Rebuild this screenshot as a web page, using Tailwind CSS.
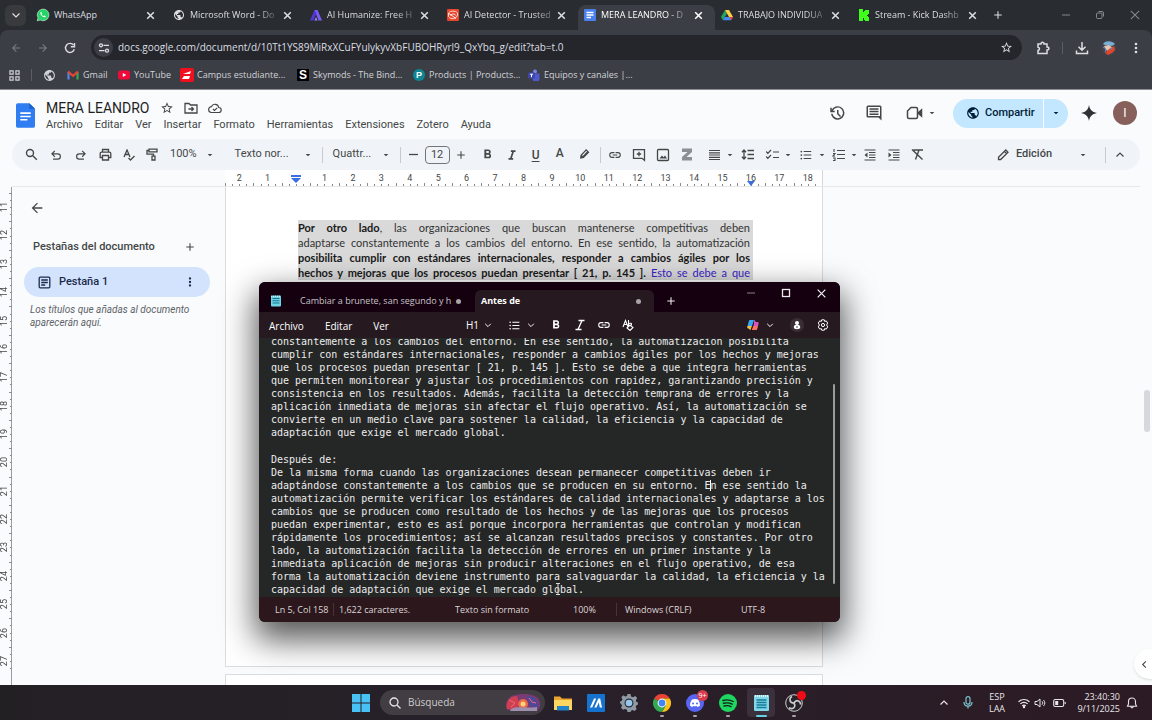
<!DOCTYPE html>
<html lang="es">
<head>
    <meta charset="UTF-8">
    <meta name="viewport" content="width=device-width, initial-scale=1.0">
    <title>MERA LEANDRO - Documentos de Google</title>
    <script src="https://cdn.jsdelivr.net/npm/@tailwindcss/browser@4"></script>
</head>
<body class="relative flex min-h-screen flex-col overflow-hidden bg-[#f9fbfd] font-['Open_Sans','Noto_Sans',sans-serif] text-[#444746]">

    <!-- Shared icons -->
    <svg class="hidden">
        <symbol id="i-x" viewBox="0 0 10 10"><path d="M2 2l6 6M8 2L2 8" stroke="currentColor" stroke-width="1.4" fill="none"/></symbol>
        <symbol id="i-caret" viewBox="0 0 24 24"><path d="M5 9l7 7 7-7z" fill="currentColor"/></symbol>
        <symbol id="i-chev" viewBox="0 0 10 10"><path d="M1.500 3.500L5 7l3.500-3.500" stroke="currentColor" stroke-width="1.200" fill="none"/></symbol>
        <symbol id="i-plus" viewBox="0 0 12 12"><path d="M6 1.500v9M1.500 6h9" stroke="currentColor" stroke-width="1.300" fill="none"/></symbol>
        <symbol id="i-dots" viewBox="0 0 24 24"><path d="M12 8a2 2 0 1 0 0-4 2 2 0 0 0 0 4zm0 2a2 2 0 1 0 0 4 2 2 0 0 0 0-4zm0 6a2 2 0 1 0 0 4 2 2 0 0 0 0-4z" fill="currentColor"/></symbol>
        <symbol id="i-back" viewBox="0 0 24 24"><path d="M20 11H7.800l5.600-5.600L12 4l-8 8 8 8 1.400-1.400L7.800 13H20z" fill="currentColor"/></symbol>
        <symbol id="i-star" viewBox="0 0 24 24"><path d="M22 9.240l-7.190-.62L12 2 9.190 8.630 2 9.240l5.460 4.730L5.820 21 12 17.270 18.180 21l-1.630-7.030L22 9.240zM12 15.400l-3.760 2.270 1-4.280-3.320-2.880 4.380-.38L12 6.100l1.710 4.040 4.380.38-3.320 2.880 1 4.280L12 15.400z" fill="currentColor"/></symbol>
        <symbol id="i-globe" viewBox="0 0 24 24"><path d="M12 2C6.480 2 2 6.480 2 12s4.480 10 10 10 10-4.480 10-10S17.520 2 12 2zm-1 17.930c-3.950-.49-7-3.850-7-7.930 0-.62.08-1.210.21-1.790L9 15v1c0 1.100.9 2 2 2v1.930zm6.900-2.540c-.26-.81-1-1.390-1.900-1.390h-1v-3c0-.55-.45-1-1-1H8v-2h2c.55 0 1-.45 1-1V7h2c1.100 0 2-.9 2-2v-.41c2.930 1.190 5 4.060 5 7.410 0 2.080-.8 3.970-2.100 5.390z" fill="currentColor"/></symbol>
        <symbol id="i-link" viewBox="0 0 24 24"><path d="M3.900 12c0-1.710 1.390-3.100 3.100-3.100h4V7H7a5 5 0 0 0 0 10h4v-1.900H7c-1.710 0-3.100-1.390-3.100-3.100zM8 13h8v-2H8v2zm9-6h-4v1.900h4a3.100 3.100 0 0 1 0 6.200h-4V17h4a5 5 0 0 0 0-10z" fill="currentColor"/></symbol>
        <symbol id="i-redo" viewBox="0 0 24 24"><path d="M14 5l5 5-5 5M19 10H9a4.500 4.500 0 0 0 0 9h8" stroke="currentColor" stroke-width="2" fill="none"/></symbol>
        <symbol id="i-italic" viewBox="0 0 24 24"><path d="M10 4v3h2.210l-3.420 10H6v3h8v-3h-2.210l3.420-10H18V4z" fill="currentColor"/></symbol>
        <symbol id="i-bold" viewBox="0 0 24 24"><path d="M15.600 10.790c.97-.67 1.650-1.770 1.650-2.790 0-2.260-1.750-4-4-4H7v14h7.040c2.090 0 3.710-1.700 3.710-3.790 0-1.520-.86-2.820-2.150-3.420zM10 6.500h3a1.500 1.500 0 0 1 0 3h-3v-3zm3.500 9H10v-3h3.500a1.500 1.500 0 0 1 0 3z" fill="currentColor"/></symbol>
        <symbol id="i-list" viewBox="0 0 24 24"><path d="M4 10.500a1.500 1.500 0 1 0 0 3 1.500 1.500 0 0 0 0-3zm0-6a1.500 1.500 0 1 0 0 3 1.500 1.500 0 0 0 0-3zm0 12a1.500 1.500 0 1 0 0 3 1.500 1.500 0 0 0 0-3zM8 19h13v-2H8v2zm0-6h13v-2H8v2zm0-8v2h13V5H8z" fill="currentColor"/></symbol>
        <symbol id="i-gdoc" viewBox="0 0 20 26"><path d="M2 0h12l6 6v18a2 2 0 0 1-2 2H2a2 2 0 0 1-2-2V2a2 2 0 0 1 2-2z" fill="#2f7df0"/><path d="M14 0l6 6h-6z" fill="#1a5fd0"/><path d="M4.500 10.500h11M4.500 14h11M4.500 17.500h7.500" stroke="#fff" stroke-width="1.600"/></symbol>
    </svg>

    <!-- Browser -->
    <header class="bg-[#292c30] text-[#dcdee2]">
        <div class="flex h-[30px] items-center">
            <button class="mr-[1px] ml-[5px] flex h-[21px] w-[21px] items-center justify-center rounded-md bg-[#383a3e]" aria-label="Buscar pestañas"><svg class="h-2.5 w-2.5"><use href="#i-chev"/></svg></button>
            <nav class="ml-[3px] flex h-full text-[9px]">
                <div class="flex w-[137px] items-center pr-[11px] pl-[6px]">
                    <svg class="h-3.5 w-3.5 shrink-0" viewBox="0 0 24 24"><path d="M2 22l1.500-5.200A10 10 0 1 1 7.200 20.500z" fill="#25d366" stroke="#dff7e6" stroke-width="1"/><path d="M8 7c1-1 2 .5 2.300 1.600.2.800-1 1.200-.7 1.900.7 1.500 1.800 2.600 3.300 3.200.8.300 1.200-1.300 2-1 1 .4 2.400 1.100 1.600 2.200-1.300 1.800-4 1-6.100-.8C8 12.200 6.500 9 8 7z" fill="#fff"/></svg>
                    <span class="ml-[4px] flex-1 whitespace-nowrap">WhatsApp</span>
                    <button aria-label="Cerrar"><svg class="h-[11px] w-[11px]"><use href="#i-x"/></svg></button>
                </div>
                <div class="flex w-[137px] items-center pr-[11px] pl-[6px]">
                    <svg class="h-3 w-3 shrink-0"><use href="#i-globe"/></svg>
                    <span class="ml-[5px] mask-r-from-80% mask-r-to-110% whitespace-nowrap">Microsoft Word - Do</span>
                    <button class="ml-auto" aria-label="Cerrar"><svg class="h-[11px] w-[11px]"><use href="#i-x"/></svg></button>
                </div>
                <div class="flex w-[137px] items-center pr-[11px] pl-[6px]">
                    <svg class="h-3 w-3 shrink-0" viewBox="0 0 12 12"><path d="M4.500 1h3L12 11.500H8.500L6 5z" fill="#7b5cf5"/><path d="M4.500 1L0 11.500h3.200L6.500 4z" fill="#5138d6"/><path d="M4.300 11.500L6 8l1.500 3.500z" fill="#9b84ff"/></svg>
                    <span class="ml-[5px] mask-r-from-80% mask-r-to-110% whitespace-nowrap">AI Humanize: Free H</span>
                    <button class="ml-auto" aria-label="Cerrar"><svg class="h-[11px] w-[11px]"><use href="#i-x"/></svg></button>
                </div>
                <div class="flex w-[137px] items-center pr-[11px] pl-[6px]">
                    <svg class="h-3 w-3 shrink-0" viewBox="0 0 12 12"><rect width="12" height="12" rx="1" fill="#e8452a"/><path d="M1.500 4c2-2.500 7-2.500 9 0v2.500C9 10 4 11 1.500 7.500z" fill="none" stroke="#fff" stroke-width=".8"/><path d="M2 4.500l7 5M3.500 6.500c1.500-2 4-2 5.500 0" fill="none" stroke="#fff" stroke-width=".9"/></svg>
                    <span class="ml-[5px] mask-r-from-80% mask-r-to-110% whitespace-nowrap">AI Detector - Trusted</span>
                    <button class="ml-auto" aria-label="Cerrar"><svg class="h-[11px] w-[11px]"><use href="#i-x"/></svg></button>
                </div>
                <div class="mt-[5px] flex w-[137px] items-center rounded-t-lg bg-[#3c3e45] pr-[11px] pb-[5px] pl-[6px] text-white">
                    <svg class="h-3 w-3 shrink-0" viewBox="0 0 12 12"><rect width="12" height="12" rx="1" fill="#4a80ee"/><path d="M2.500 3.500h7M2.500 6h7M2.500 8.500h4.500" stroke="#fff" stroke-width="1.300"/></svg>
                    <span class="ml-[5px] mask-r-from-80% mask-r-to-110% whitespace-nowrap">MERA LEANDRO - D</span>
                    <button class="ml-auto" aria-label="Cerrar"><svg class="h-[11px] w-[11px]"><use href="#i-x"/></svg></button>
                </div>
                <div class="flex w-[137px] items-center pr-[11px] pl-[6px]">
                    <svg class="h-3 w-3 shrink-0" viewBox="0 0 12 12"><path d="M4 1L0 8l2 3.300L6 4.500z" fill="#1fa463"/><path d="M4 1h4l4 7H8z" fill="#ffcf48"/><path d="M2 11.300L4 8h8l-2 3.300z" fill="#4688f4"/><path d="M10 11.300L8.500 8H12z" fill="#ea4335"/></svg>
                    <span class="ml-[5px] mask-r-from-80% mask-r-to-110% whitespace-nowrap">TRABAJO INDIVIDUA</span>
                    <button class="ml-auto" aria-label="Cerrar"><svg class="h-[11px] w-[11px]"><use href="#i-x"/></svg></button>
                </div>
                <div class="flex w-[137px] items-center pr-[11px] pl-[6px]">
                    <svg class="h-3 w-3 shrink-0" viewBox="0 0 12 12"><path d="M1 0h4v3h1V2h1V1h4v4h-1v1H9v1h1v1h1v4H7v-1H6V9H5v3H1z" fill="#3fff1a"/></svg>
                    <span class="ml-[5px] mask-r-from-80% mask-r-to-110% whitespace-nowrap">Stream - Kick Dashb</span>
                    <button class="ml-auto" aria-label="Cerrar"><svg class="h-[11px] w-[11px]"><use href="#i-x"/></svg></button>
                </div>
            </nav>
            <button class="ml-[4px]" aria-label="Nueva pestaña"><svg class="h-[10px] w-[10px]"><use href="#i-plus"/></svg></button>
            <div class="mr-[11px] ml-auto flex items-center gap-[24px] text-[#85888d]">
                <button aria-label="Minimizar"><svg class="h-2.5 w-2.5" viewBox="0 0 10 10"><path d="M1 5h8" stroke="currentColor"/></svg></button>
                <button aria-label="Restaurar"><svg class="h-2.5 w-2.5" viewBox="0 0 10 10" fill="none" stroke="currentColor"><rect x="1.500" y="3" width="5.500" height="5.500" rx="1"/><path d="M3.500 1.500H7A1.500 1.500 0 0 1 8.500 3v3.500"/></svg></button>
                <button aria-label="Cerrar ventana"><svg class="h-3 w-3" viewBox="0 0 10 10"><path d="M1.500 1.500l7 7M8.500 1.500l-7 7" stroke="currentColor" stroke-width=".9"/></svg></button>
            </div>
        </div>

        <div class="rounded-t-lg border-b border-[#8c8d94] bg-[#3c3e45]">
            <div class="flex h-[35px] items-center">
                <div class="ml-[10px] flex w-[81px] items-center gap-[15px] text-[#7c7f86]">
                    <button aria-label="Atrás"><svg class="h-3 w-3"><use href="#i-back"/></svg></button>
                    <button aria-label="Adelante"><svg class="h-3 w-3 rotate-180"><use href="#i-back"/></svg></button>
                    <button class="text-[#dcdee2]" aria-label="Recargar"><svg class="h-3 w-3" viewBox="0 0 12 12" fill="none" stroke="currentColor" stroke-width="1.400"><path d="M10.300 7.300A4.500 4.500 0 1 1 9.600 3.200"/><path d="M10.500 1v3.700H6.800"/></svg></button>
                </div>
                <div class="flex h-[25px] flex-1 items-center rounded-full bg-[#24262b] px-[3px]">
                    <span class="flex h-[19px] w-[19px] shrink-0 items-center justify-center rounded-full bg-[#3c3e45]"><svg class="h-3 w-3" viewBox="0 0 12 12" fill="none" stroke="currentColor" stroke-width="1.300"><circle cx="3" cy="3.300" r="1.500"/><path d="M5.500 3.300H11M1 8.700h5.500"/><circle cx="9" cy="8.700" r="1.500"/></svg></span>
                    <input class="ml-[5px] min-w-0 flex-1 bg-transparent text-[10px] outline-none" aria-label="Dirección" value="docs.google.com/document/d/10Tt1YS89MiRxXCuFYulykyvXbFUBOHRyrl9_QxYbq_g/edit?tab=t.0">
                    <button class="mr-[6px]" aria-label="Favorito"><svg class="h-[13px] w-[13px]"><use href="#i-star"/></svg></button>
                </div>
                <div class="mr-[8px] ml-[14px] flex items-center">
                    <button aria-label="Extensiones"><svg class="h-[14px] w-[14px]" viewBox="0 0 14 14" fill="none" stroke="currentColor" stroke-width="1.500"><path d="M2 3h3c0-2.500 3-2.500 3 0h3v3c2.500 0 2.500 3 0 3v3.500H2V9.500c2-.3 2-3 0-3.300z"/></svg></button>
                    <span class="mx-[12px] h-3 w-px bg-[#5c5e66]"></span>
                    <button aria-label="Descargas"><svg class="h-[14px] w-[14px]" viewBox="0 0 14 14" fill="none" stroke="currentColor" stroke-width="1.500"><path d="M7 1v8M3.500 5.800L7 9.300l3.500-3.500M1.500 9.500v3h11v-3"/></svg></button>
                    <svg class="ml-[12px] h-4 w-4" viewBox="0 0 16 16"><circle cx="8" cy="8" r="7.500" fill="#45424c"/><path d="M2 4c3-4 9-3 12 0l-3 2-7-1z" fill="#77aed4"/><path d="M3 6l5-1 4 3-3 4-4-2z" fill="#e5c5b4"/><path d="M8 9l5-3 1 4-3 3-4 2-3-2z" fill="#d9482f"/><path d="M2 7l3 2-1 3M9 8l2 1" stroke="#5b8fc4" fill="none"/></svg>
                    <button class="ml-[11px]" aria-label="Menú"><svg class="h-4 w-4"><use href="#i-dots"/></svg></button>
                </div>
            </div>
            <nav class="flex h-[24px] items-center pb-[4px] text-[9px] text-[#d0d2d8]">
                <svg class="ml-[9px] h-[11px] w-[11px]" viewBox="0 0 12 12" fill="none" stroke="currentColor" stroke-width="1.300"><path d="M1 1h3.500v3.500H1zM7.500 1H11v3.500H7.500zM1 7.500h3.500V11H1zM7.500 7.500H11V11H7.500z"/></svg>
                <span class="mx-[11px] h-3 w-px bg-[#5c5e66]"></span>
                <svg class="h-[13px] w-[13px]"><use href="#i-globe"/></svg>
                <a href="#" class="ml-[11px] flex w-[51px] items-center gap-[4px] whitespace-nowrap"><svg class="h-3 w-3 shrink-0" viewBox="0 0 12 12" fill="none" stroke-width="2.200"><path d="M1.500 10.500V3" stroke="#4f86ec"/><path d="M10.500 10.500V3" stroke="#34a853"/><path d="M1 2.500l5 4.300 5-4.300" stroke="#ea4335"/></svg>Gmail</a>
                <a href="#" class="flex w-[62px] items-center gap-[4px] whitespace-nowrap"><svg class="h-3 w-3 shrink-0" viewBox="0 0 12 12"><rect y="1.500" width="12" height="9" rx="2.500" fill="#f00a3a"/><path d="M4.800 4v4L8.300 6z" fill="#fff"/></svg>YouTube</a>
                <a href="#" class="flex w-[117px] items-center gap-[3px] whitespace-nowrap"><svg class="h-3.5 w-3.5 shrink-0" viewBox="0 0 14 14"><rect width="14" height="14" rx="2" fill="#f00f1d"/><path d="M3 6l8-3-1 3H5M4 8h6l-1 3H2z" fill="#fff"/></svg>Campus estudiante...</a>
                <a href="#" class="flex w-[116px] items-center gap-[4px] whitespace-nowrap"><span class="flex h-3 w-3 items-center justify-center bg-black font-['Liberation_Sans',sans-serif] text-[12px] leading-3 font-bold text-white">S</span>Skymods - The Bind...</a>
                <a href="#" class="flex w-[115px] items-center gap-[4px] whitespace-nowrap"><span class="flex h-3 w-3 items-center justify-center rounded-full bg-[#0b8795] font-['Liberation_Sans',sans-serif] text-[9px] leading-3 font-bold text-white">P</span>Products | Products...</a>
                <a href="#" class="flex items-center gap-[4px] whitespace-nowrap"><svg class="h-3 w-3 shrink-0" viewBox="0 0 12 12"><circle cx="7" cy="2.500" r="2" fill="#7b83eb"/><path d="M4 4.500h7.500V9a3 3 0 0 1-7 1z" fill="#5059c9"/><rect y="3.500" width="7" height="6" rx="1" fill="#3f46b0"/><path d="M2 5.200h3M3.500 5.200v3" stroke="#fff"/></svg>Equipos y canales |...</a>
            </nav>
        </div>
    </header>

    <!-- Document editor -->
    <main class="relative flex flex-1 flex-col overflow-hidden font-['Roboto',sans-serif]">
        <div class="flex h-[49px]">
            <svg class="mt-[13px] ml-[16px] h-[25px] w-[19px]"><use href="#i-gdoc"/></svg>
            <div class="ml-[11px] pt-[10px]">
                <div class="flex items-center text-[#444746]">
                    <h1 class="text-[14px] leading-4 text-[#1f1f1f]">MERA LEANDRO</h1>
                    <button class="ml-[11px]" aria-label="Destacar"><svg class="h-[14px] w-[14px]"><use href="#i-star"/></svg></button>
                    <button class="ml-[10px]" aria-label="Mover"><svg class="h-[14px] w-[14px]" viewBox="0 0 14 14" fill="none" stroke="currentColor" stroke-width="1.300"><path d="M1 2.500h4l1.500 1.500H13v8H1zM4.500 8H9M7.500 6l2 2-2 2"/></svg></button>
                    <button class="ml-[10px]" aria-label="Estado"><svg class="h-[14px] w-[14px]" viewBox="0 0 14 14" fill="none" stroke="currentColor" stroke-width="1.200"><path d="M3.700 11.500a2.900 2.900 0 0 1-.3-5.800 3.800 3.800 0 0 1 7.300.8 2.500 2.500 0 0 1 0 5zM5 8l1.500 1.500L9.200 6.800"/></svg></button>
                </div>
                <nav class="mt-[2px] flex gap-[12px] text-[11px] leading-[13px] whitespace-nowrap">
                    <a href="#">Archivo</a><a href="#">Editar</a><a href="#">Ver</a><a href="#">Insertar</a><a href="#">Formato</a><a href="#">Herramientas</a><a href="#">Extensiones</a><a href="#">Zotero</a><a href="#">Ayuda</a>
                </nav>
            </div>
            <div class="mr-[15px] ml-auto flex h-[46px] items-center">
                <button aria-label="Historial"><svg class="h-[18px] w-[18px]" viewBox="0 0 24 24"><path d="M13 3a9 9 0 0 0-8 5V5H3v6h6V9H6.500A7 7 0 1 1 6 13H4a9 9 0 1 0 9-10zm-1 5v5.300l4 4 1.400-1.400-3.400-3.400V8z" fill="currentColor"/></svg></button>
                <button class="ml-[19px]" aria-label="Comentarios"><svg class="h-[18px] w-[18px]" viewBox="0 0 24 24"><path d="M22 4a2 2 0 0 0-2-2H4a2 2 0 0 0-2 2v12a2 2 0 0 0 2 2h14l4 4zM4 4h16v12H4zm2 1.500v2h12v-2zm0 3.500v2h12V9zm0 3.500v2h12v-2z" fill="currentColor"/></svg></button>
                <button class="ml-[23px] flex items-center gap-[5px]" aria-label="Reunión"><svg class="h-[16px] w-[17px]" viewBox="0 0 17 16" fill="none" stroke="currentColor" stroke-width="1.500"><path d="M5 2.500h5a1.500 1.500 0 0 1 1.500 1.500v8a1.500 1.500 0 0 1-1.500 1.500H3A1.500 1.500 0 0 1 1.500 12V6z"/><path d="M12 8l3.500-3v6z" fill="currentColor"/></svg><svg class="h-2 w-2"><use href="#i-caret"/></svg></button>
                <div class="ml-[17px] flex h-[29px] overflow-hidden rounded-full bg-[#c2e7ff] text-[#001d35]">
                    <button class="flex w-[91px] items-center gap-[5px] border-r border-[#f9fbfd] pl-[13px] text-[11px] font-medium"><svg class="h-[14px] w-[14px]"><use href="#i-globe"/></svg>Compartir</button>
                    <button class="flex w-[24px] items-center justify-center" aria-label="Opciones para compartir"><svg class="h-2 w-2"><use href="#i-caret"/></svg></button>
                </div>
                <svg class="ml-[13px] h-4 w-4" viewBox="0 0 16 16"><path d="M8 0c.7 4.500 3 7 8 8-5 1-7.300 3.500-8 8-.7-4.500-3-7-8-8 5-1 7.300-3.500 8-8z" fill="#303134"/></svg>
                <span class="ml-[16px] flex h-6 w-6 items-center justify-center rounded-full bg-[#87605b] text-[12px] text-white">I</span>
            </div>
        </div>

        <div class="mr-[12px] ml-[12px] flex h-[31px] shrink-0 items-center rounded-full bg-[#f0f4f9] pl-[13px] text-[11px] whitespace-nowrap">
            <div class="flex w-[136px] items-center gap-[11px]">
                <button aria-label="Buscar"><svg class="h-[13px] w-[13px]" viewBox="0 0 13 13" fill="none" stroke="currentColor" stroke-width="1.400"><circle cx="5" cy="5" r="3.500"/><path d="M7.800 7.800l4 4"/></svg></button>
                <button aria-label="Deshacer"><svg class="h-[14px] w-[14px] -scale-x-100"><use href="#i-redo"/></svg></button>
                <button aria-label="Rehacer"><svg class="h-[14px] w-[14px]"><use href="#i-redo"/></svg></button>
                <button aria-label="Imprimir"><svg class="h-[13px] w-[13px]" viewBox="0 0 13 13" fill="none" stroke="currentColor" stroke-width="1.300"><path d="M3.500 4V1.500h6V4M3.500 9.500H1.200V5.500a1.400 1.400 0 0 1 1.400-1.400h7.800a1.400 1.400 0 0 1 1.400 1.400v4H9.500M3.500 7.500h6V12h-6z"/></svg></button>
                <button aria-label="Ortografía"><svg class="h-[12px] w-[12px]" viewBox="0 0 12 12" fill="none" stroke="currentColor" stroke-width="1.300"><path d="M1 8l3-7 3 7M2 5.500h4M5.500 9l2 2L11.500 7"/></svg></button>
                <button aria-label="Copiar formato"><svg class="h-[13px] w-[13px]" viewBox="0 0 13 13" fill="none" stroke="currentColor" stroke-width="1.300"><path d="M3 1.200h8v2.600H3zM3 2.500H1v3.700h6.500v2M6 8.200h3V12H6z"/></svg></button>
            </div>
            <button class="ml-[9px] flex items-center gap-[9px]">100%<svg class="h-2 w-2"><use href="#i-caret"/></svg></button>
            <button class="ml-[21px] flex w-[77px] items-center justify-between">Texto nor...<svg class="h-2 w-2"><use href="#i-caret"/></svg></button>
            <span class="mx-[10px] h-4 w-px bg-[#c7c9cc]"></span>
            <button class="flex w-[57px] items-center justify-between">Quattr...<svg class="h-2 w-2"><use href="#i-caret"/></svg></button>
            <span class="mr-[7px] ml-[10px] h-4 w-px bg-[#c7c9cc]"></span>
            <button aria-label="Reducir"><svg class="h-[11px] w-[11px]" viewBox="0 0 11 11"><path d="M1 5.500h9" stroke="currentColor" stroke-width="1.300"/></svg></button>
            <input class="mx-[6px] h-[18px] w-[25px] rounded border border-[#747775] text-center text-[11px]" aria-label="Tamaño de fuente" value="12">
            <button aria-label="Aumentar"><svg class="h-[10px] w-[10px]"><use href="#i-plus"/></svg></button>
            <div class="ml-[14px] flex items-center gap-[10px]">
                <button aria-label="Negrita"><svg class="h-[15px] w-[15px]"><use href="#i-bold"/></svg></button>
                <button aria-label="Cursiva"><svg class="h-[14px] w-[14px]"><use href="#i-italic"/></svg></button>
                <button class="w-[14px] text-[12px] leading-4 font-medium underline underline-offset-2">U</button>
                <button class="w-[14px] pb-[3px] text-[12px] leading-3 font-medium">A</button>
                <button aria-label="Resaltar"><svg class="h-[14px] w-[14px]" viewBox="0 0 13 13"><path d="M8.500 1l3 3-5.200 5.200-3.500.8.500-3.600z" fill="currentColor"/><path d="M5 7l4-4" stroke="#f0f4f9"/></svg></button>
            </div>
            <span class="mr-[7px] ml-[9px] h-4 w-px bg-[#c7c9cc]"></span>
            <div class="flex items-center gap-[10px]">
                <button aria-label="Enlace"><svg class="h-[14px] w-[14px]"><use href="#i-link"/></svg></button>
                <button aria-label="Comentario"><svg class="h-[14px] w-[14px]" viewBox="0 0 14 14" fill="none" stroke="currentColor" stroke-width="1.300"><path d="M1.500 1.700h11v10.600L10 10.300H1.500zM7 3.800v4.400M4.800 6h4.400"/></svg></button>
                <button aria-label="Imagen"><svg class="h-[14px] w-[14px]" viewBox="0 0 14 14" fill="none" stroke="currentColor" stroke-width="1.300"><rect x="1.500" y="1.500" width="11" height="11" rx="1"/><path d="M3.500 10.500L6 7.500l1.500 1.800L9 7.500l2 3z" fill="currentColor" stroke="none"/></svg></button>
                <button aria-label="Zotero"><svg class="h-[13px] w-[14px]" viewBox="0 0 12 13"><path d="M1 .5h10v3.500L5.500 9H11v3.500H1V9l5.500-5H1z" fill="#8c8f93"/></svg></button>
            </div>
            <div class="ml-[14px] flex items-center">
                <button class="flex w-[33px] items-center gap-[5px]" aria-label="Alinear"><svg class="h-[12px] w-[13px]" viewBox="0 0 13 12"><path d="M1 1.500h11M1 3.800h11M1 6h11M1 8.300h11M1 10.500h11" stroke="currentColor" stroke-width="1.200"/></svg><svg class="h-2 w-2"><use href="#i-caret"/></svg></button>
                <button class="w-[25px]" aria-label="Interlineado"><svg class="h-[13px] w-[13px]" viewBox="0 0 13 13"><path d="M3 2.500v8M1 4.200l2-2.200 2 2.200M1 8.800L3 11l2-2.200M6.500 2.500H13M6.500 6.500H13M6.500 10.500H13" fill="none" stroke="currentColor" stroke-width="1.300"/></svg></button>
                <button class="flex w-[33px] items-center gap-[5px]" aria-label="Lista de control"><svg class="h-[13px] w-[13px]" viewBox="0 0 13 13"><path d="M0 3.500l1.800 1.800L5 2M0 8.500l1.800 1.800L5 7M7 4h6M7 9.500h6" fill="none" stroke="currentColor" stroke-width="1.200"/></svg><svg class="h-2 w-2"><use href="#i-caret"/></svg></button>
                <button class="flex w-[33px] items-center gap-[5px]" aria-label="Viñetas"><svg class="h-[14px] w-[14px]"><use href="#i-list"/></svg><svg class="h-2 w-2"><use href="#i-caret"/></svg></button>
                <button class="flex w-[32px] items-center gap-[5px]" aria-label="Numeración"><svg class="h-[13px] w-[13px]" viewBox="0 0 13 13"><path d="M2 1v3M1 5.500h2L1 8h2M1 10h2v2.500H1M5 2.500h8M5 6.500h8M5 10.500h8" fill="none" stroke="currentColor" stroke-width="1.100"/></svg><svg class="h-2 w-2"><use href="#i-caret"/></svg></button>
                <button class="w-[24px]" aria-label="Reducir sangría"><svg class="h-[12px] w-[12px]" viewBox="0 0 12 12"><path d="M.5 1h11M5 3.500h6.500M5 6h6.500M5 8.500h6.500M.5 11h11" stroke="currentColor" stroke-width="1.200"/><path d="M3.500 3.500v5L.5 6z" fill="currentColor"/></svg></button>
                <button class="w-[23px]" aria-label="Aumentar sangría"><svg class="h-[12px] w-[12px]" viewBox="0 0 12 12"><path d="M.5 1h11M5 3.500h6.500M5 6h6.500M5 8.500h6.500M.5 11h11" stroke="currentColor" stroke-width="1.200"/><path d="M.5 3.500v5l3-2.500z" fill="currentColor"/></svg></button>
                <button aria-label="Borrar formato"><svg class="h-[13px] w-[13px]" viewBox="0 0 13 13"><path d="M2.500 2H12M8 2L4.500 11.500M1 1.500l10.500 10" fill="none" stroke="currentColor" stroke-width="1.400"/></svg></button>
            </div>
            <button class="mr-[10px] ml-auto flex w-[90px] items-center font-medium"><svg class="mr-[6px] h-[13px] w-[13px]" viewBox="0 0 13 13" fill="none" stroke="currentColor" stroke-width="1.300"><path d="M1.500 11.500v-2.200l7.300-7.300 2.200 2.200-7.300 7.300zM7.500 3.500l2 2"/></svg>Edición<svg class="ml-auto h-2 w-2"><use href="#i-caret"/></svg></button>
            <span class="mr-[9px] ml-[8px] h-4 w-px bg-[#c7c9cc]"></span>
            <button class="mr-[15px]" aria-label="Ocultar menús"><svg class="h-[10px] w-[10px] rotate-180"><use href="#i-chev"/></svg></button>
        </div>

        <!-- Horizontal ruler -->
        <div class="mr-[12px] ml-[12px] flex h-[17px] shrink-0 border-b border-[#e6e8ea] pl-[213px]">
            <div id="ruler-h" class="grid w-[598px] grid-cols-21 items-end border-r border-[#d5d7da] bg-white text-center text-[9px] leading-[9px]"></div>
        </div>

        <div class="flex flex-1">
            <div id="ruler-v" class="flex w-[12px] flex-col border-r border-[#9a9da0] pt-[6px] text-[9px]"></div>

            <aside class="w-[213px] text-[11px]">
                <button class="mt-[13px] ml-[17px] block" aria-label="Cerrar esquema"><svg class="h-4 w-4"><use href="#i-back"/></svg></button>
                <div class="mt-[22px] flex h-[18px] items-center justify-between pr-[30px] pl-[21px]">
                    <h2 class="font-medium">Pestañas del documento</h2>
                    <button aria-label="Añadir pestaña"><svg class="h-[10px] w-[10px]"><use href="#i-plus"/></svg></button>
                </div>
                <div class="mt-[11px] mr-[15px] ml-[12px] flex h-[30px] items-center rounded-full bg-[#d3e3fd] pr-[13px] pl-[14px] font-medium text-[#1b2b4b]">
                    <svg class="mr-[8px] h-[13px] w-[13px]" viewBox="0 0 13 13" fill="none" stroke="currentColor" stroke-width="1.300"><rect x="1.200" y="1.200" width="10.600" height="10.600" rx="1"/><path d="M3.200 4h6.600M3.200 6.500h6.600M3.200 9h4"/></svg>
                    Pestaña 1
                    <button class="ml-auto" aria-label="Opciones de pestaña"><svg class="h-[14px] w-[14px]"><use href="#i-dots"/></svg></button>
                </div>
                <p class="mt-[6px] pl-[18px] text-[10px] leading-[13px] whitespace-nowrap text-[#5f6368] italic">Los títulos que añadas al documento<br>aparecerán aquí.</p>
            </aside>

            <div class="flex w-[598px] flex-col">
                <article class="flex-1 border-x border-b border-[#dadce0] bg-white px-[72px] pt-[33px] font-['Lato',sans-serif] text-[11px] leading-[15px] text-[#333]">
                    <div class="-mr-[3px] bg-[#d9d9d9] pr-[3px]">
                        <p class="text-justify whitespace-nowrap [text-align-last:justify]"><b class="text-[#1a1a1a]">Por otro lado</b>, las organizaciones que buscan mantenerse competitivas deben</p>
                        <p class="text-justify whitespace-nowrap [text-align-last:justify]">adaptarse constantemente a los cambios del entorno. En ese sentido, la automatización</p>
                        <p class="text-justify font-bold whitespace-nowrap text-[#1a1a1a] [text-align-last:justify]">posibilita cumplir con estándares internacionales, responder a cambios ágiles por los</p>
                        <p class="text-justify whitespace-nowrap [text-align-last:justify]"><b class="text-[#1a1a1a]">hechos y mejoras que los procesos puedan presentar [ 21, p. 145 ].</b> <span class="text-[#3a22c8]">Esto se debe a que</span></p>
                    </div>
                </article>
                <div class="mt-[7px] h-[11px] border-x border-t border-[#dadce0] bg-white"></div>
            </div>
        </div>

        <div class="absolute top-[300px] right-[2px] h-[42px] w-[6px] rounded-full bg-[#d5d8dc]"></div>
        <button class="absolute right-[-12px] bottom-[6px] flex h-[30px] w-[30px] items-center rounded-full bg-white pl-[6px] shadow" aria-label="Mostrar panel"><svg class="h-[9px] w-[9px] rotate-90"><use href="#i-chev"/></svg></button>
    </main>

    <!-- Notepad window -->
    <section class="absolute top-[282px] left-[259px] flex w-[581px] flex-col overflow-hidden rounded-md bg-[#252626] text-[#ececec] shadow-[0_14px_32px_4px_rgba(0,0,0,0.65)]">
        <div class="flex h-[30px] bg-[#14000f] text-[10px]">
            <svg class="mt-[13px] ml-[12px] h-3 w-[10px]" viewBox="0 0 10 12"><rect y=".5" width="10" height="11" rx="1" fill="#6fd3e6"/><path d="M1.500 3.500h7M1.500 5.700h7M1.500 8h7" stroke="#14748f" stroke-width="1.100"/><path d="M0 1.300h10" stroke="#e8fbff" stroke-dasharray="1 1"/></svg>
            <div class="ml-[19px] flex w-[175px] items-center justify-between pt-[8px] pr-[14px] text-[9px] whitespace-nowrap text-[#c9c3c8]"><span>Cambiar a brunete, san segundo y h</span><i class="h-[5px] w-[5px] rounded-full bg-[#a9a3a8]"></i></div>
            <div class="mt-[8px] flex w-[179px] items-center justify-between rounded-t-md bg-[#261a20] pr-[13px] pl-[6px] text-[9px] font-bold text-white"><span>Antes de</span><i class="h-[5px] w-[5px] rounded-full bg-[#a9a3a8]"></i></div>
            <button class="mt-[8px] ml-[12px]" aria-label="Nueva pestaña"><svg class="h-[10px] w-[10px]"><use href="#i-plus"/></svg></button>
            <div class="mr-[13px] ml-auto flex h-[22px] items-center gap-[25px]">
                <button aria-label="Minimizar"><svg class="h-[10px] w-[10px]" viewBox="0 0 10 10"><path d="M1 5h8" stroke="#8a8088"/></svg></button>
                <button aria-label="Maximizar"><svg class="h-[10px] w-[10px]" viewBox="0 0 10 10"><rect x="1.500" y="1.500" width="7" height="7" fill="none" stroke="currentColor" stroke-width="1.300"/></svg></button>
                <button aria-label="Cerrar"><svg class="h-[11px] w-[11px]" viewBox="0 0 10 10"><path d="M1.500 1.500l7 7M8.500 1.500l-7 7" stroke="currentColor" stroke-width="1.100"/></svg></button>
            </div>
        </div>
        <div class="flex h-[26px] items-center bg-[#261a20] pl-[10px] text-[10px] text-white">
            <div class="flex w-[197px] gap-[21px] pt-[2px]"><button>Archivo</button><button>Editar</button><button>Ver</button></div>
            <button class="flex w-[42px] items-center gap-[5px]">H1<svg class="h-2 w-2"><use href="#i-chev"/></svg></button>
            <button class="flex w-[41px] items-center gap-[6px]" aria-label="Lista"><svg class="h-[13px] w-[13px]"><use href="#i-list"/></svg><svg class="h-2 w-2"><use href="#i-chev"/></svg></button>
            <div class="flex items-center gap-[11px]">
                <button aria-label="Negrita"><svg class="h-[14px] w-[14px]"><use href="#i-bold"/></svg></button>
                <button aria-label="Cursiva"><svg class="h-3 w-3" viewBox="0 0 12 12" fill="none" stroke="currentColor" stroke-width="1.300"><path d="M4.500 1.500h6M1.500 10.500h6M8 1.500l-4 9"/></svg></button>
                <button aria-label="Enlace"><svg class="h-[14px] w-[14px]"><use href="#i-link"/></svg></button>
                <button aria-label="Borrar formato"><svg class="h-3 w-3" viewBox="0 0 12 12" fill="none" stroke="currentColor" stroke-width="1.100"><path d="M1 8l2.500-6.500L6 8M2 5.500h3M6.500 1v5.500c3.500 1 4.500-3.500 0-2M5 9l3-3 3 2.500L8 11.500z"/></svg></button>
            </div>
            <div class="mr-[11px] ml-auto flex items-center">
                <svg class="h-3 w-3" viewBox="0 0 12 12"><path d="M3 1h4L5 7 3 9.500H1.500C0 9.500.3 8 .6 7L1.700 2.500C2 1.500 2.300 1 3 1z" fill="#38a8f2"/><path d="M7 1c1 0 1.300 1 1.500 2h2c1.500 0 1.200 1.500.9 2.500L10.300 9.500C10 10.500 9.600 11 9 11H5l2-6z" fill="#d356bd"/><path d="M.6 7h4.200L3.500 11C2.600 11 2.300 10 2 9.500 0 9.500.2 8 .6 7z" fill="#f2c339"/><path d="M5 11l1.500-4h4.300l-.7 2.500C9.800 10.500 9.500 11 9 11z" fill="#fb7455"/></svg>
                <svg class="ml-[7px] h-2 w-2"><use href="#i-chev"/></svg>
                <span class="ml-[16px] flex h-[14px] w-[14px] items-center justify-center rounded-full bg-[#3a2d34]"><svg class="h-[10px] w-[10px]" viewBox="0 0 10 10"><circle cx="5" cy="3" r="2" fill="#fff"/><ellipse cx="5" cy="7" rx="3.200" ry="2.200" fill="#fff"/><circle cx="5" cy="7" r=".8" fill="#3a2d34"/></svg></span>
                <button class="ml-[13px]" aria-label="Configuración"><svg class="h-3 w-3" viewBox="0 0 12 12" fill="none" stroke="currentColor"><path d="M4.700.8h2.600l.4 1.600 1.600-.5 1.400 2.200L9.600 6l1.100 1.900-1.400 2.200-1.600-.5-.4 1.600H4.700l-.4-1.600-1.600.5-1.400-2.200L2.400 6 1.300 4.100l1.400-2.200 1.600.5z"/><circle cx="6" cy="6" r="1.600"/></svg></button>
            </div>
        </div>
        <div class="relative h-[259px] overflow-hidden pl-[12px] font-['DejaVu_Sans_Mono',monospace] text-[10px] leading-[13px] whitespace-nowrap">
            <p class="-mt-[3px]">constantemente a los cambios del entorno. En ese sentido, la automatización posibilita<br>cumplir con estándares internacionales, responder a cambios ágiles por los hechos y mejoras<br>que los procesos puedan presentar [ 21, p. 145 ]. Esto se debe a que integra herramientas<br>que permiten monitorear y ajustar los procedimientos con rapidez, garantizando precisión y<br>consistencia en los resultados. Además, facilita la detección temprana de errores y la<br>aplicación inmediata de mejoras sin afectar el flujo operativo. Así, la automatización se<br>convierte en un medio clave para sostener la calidad, la eficiencia y la capacidad de<br>adaptación que exige el mercado global.</p>
            <p class="mt-[14px]">Después de:<br>De la misma forma cuando las organizaciones desean permanecer competitivas deben ir<br>adaptándose constantemente a los cambios que se producen en su entorno. En ese sentido la<br>automatización permite verificar los estándares de calidad internacionales y adaptarse a los<br>cambios que se producen como resultado de los hechos y de las mejoras que los procesos<br>puedan experimentar, esto es así porque incorpora herramientas que controlan y modifican<br>rápidamente los procedimientos; así se alcanzan resultados precisos y constantes. Por otro<br>lado, la automatización facilita la detección de errores en un primer instante y la<br>inmediata aplicación de mejoras sin producir alteraciones en el flujo operativo, de esa<br>forma la automatización deviene instrumento para salvaguardar la calidad, la eficiencia y la<br>capacidad de adaptación que exige el mercado global.</p>
            <!-- Text caret and mouse pointer -->
            <i class="absolute top-[142px] left-[451px] h-[11px] w-px bg-white"></i>
            <svg class="absolute top-[245px] left-[296px] h-[12px] w-[6px]" viewBox="0 0 6 12"><path d="M1 .5h4M3 .5v11M1 11.500h4" stroke="#d8d8d8" fill="none"/></svg>
            <div class="absolute top-[46px] right-[5px] h-[200px] w-[2px] rounded-full bg-[#9a9c9c]"></div>
        </div>
        <footer class="flex h-[25px] items-center bg-[#2b171c] pl-[16px] text-[9px] whitespace-nowrap text-[#ddd6d8]">
            <span class="w-[58px]">Ln 5, Col 158</span>
            <span class="w-[122px] border-l border-[#46343a] pl-[5px]">1,622 caracteres.</span>
            <span class="w-[118px]">Texto sin formato</span>
            <span class="w-[43px]">100%</span>
            <span class="w-[125px] border-l border-[#46343a] pl-[8px]">Windows (CRLF)</span>
            <span>UTF-8</span>
        </footer>
    </section>

    <!-- Taskbar -->
    <footer class="flex h-[35px] items-center bg-linear-to-r from-[#232024] via-[#28202a] to-[#2c1a24] text-[#e8e6e8]">
        <div class="ml-auto flex items-center pl-[12px]">
            <button aria-label="Inicio"><svg class="h-[18px] w-[18px]" viewBox="0 0 18 18"><path d="M0 0h8.500v8.500H0zM9.500 0H18v8.500H9.500zM0 9.500h8.500V18H0zM9.500 9.500H18V18H9.500z" fill="#48c1f5"/></svg></button>
            <label class="ml-[10px] flex h-[25px] w-[165px] items-center rounded-full bg-[#413d42] pl-[9px]">
                <svg class="h-3 w-3" viewBox="0 0 12 12" fill="none" stroke="#e8e6e8" stroke-width="1.300"><circle cx="5" cy="5" r="4"/><path d="M8 8l3.500 3.500"/></svg>
                <input class="ml-[7px] w-[90px] bg-transparent text-[10px] outline-none placeholder:text-[#cfcbcf]" placeholder="Búsqueda" aria-label="Búsqueda">
                <svg class="ml-[7px] h-[18px] w-[36px]" viewBox="0 0 36 18"><path d="M2 16C-1 8 4 1 11 1c5-2 14-1 19 1 6 3 7 11 2 15z" fill="#7a3a73"/><path d="M2 15C0 8 5 2 12 2l2 7-3 7z" fill="#cf3f52"/><path d="M22 2c8 0 12 6 11 12l-8-2z" fill="#4e489b"/><circle cx="18" cy="10" r="5" fill="#ea6948"/><circle cx="18" cy="10" r="2.500" fill="#ffd37b"/><path d="M6 15c6-4 14 0 26-2v4H5z" fill="#9d8fae"/><path d="M4 6l6 3-4 4M24 4l3 4 4 1" stroke="#f26a75" fill="none"/></svg>
            </label>
            <div class="ml-[7px] flex items-center gap-[11px]">
                <button class="flex h-[35px] w-[22px] items-center justify-center" aria-label="Explorador"><svg class="h-[18px] w-[18px]" viewBox="0 0 18 18"><path d="M0 2.500h6l2 2h10V16H0z" fill="#e9a52d"/><path d="M0 6h18v10H0z" fill="#fcd660"/><path d="M3 12h12v4.500H3z" fill="#2183ca"/></svg></button>
                <button class="flex h-[35px] w-[22px] items-center justify-center" aria-label="Aplicación"><svg class="h-[18px] w-[18px]" viewBox="0 0 18 18"><rect width="18" height="18" rx="1" fill="#1572cf"/><path d="M3 13.500l4-9h2.200l-4 9zM7.300 13.500l4-9h1.900l1.800 9h-2.200l-1-5-2.300 5z" fill="#fff"/></svg></button>
                <button class="flex h-[35px] w-[22px] items-center justify-center" aria-label="Configuración"><svg class="h-[18px] w-[18px]" viewBox="0 0 18 18"><path d="M7.500 0h3l.5 2.500 2 .8 2.200-1.300 2 2.100-1.400 2.200.7 1.700 1.500.5v2l-1.800 1-.5 1.500 1 2-2 2-2.200-.9-1.500.7-.5 1.700h-3L7 15.700l-2-.8-2 .9-2-2 1-2-.8-1.800L0 9V7.500L1.700 7l.7-1.800L1.300 3.300l2-2 2 1.200L7 1.900z" fill="#909aa5"/><circle cx="9" cy="9" r="4.500" fill="#2b3038"/><circle cx="9" cy="9" r="3.300" fill="#96c7ed"/></svg></button>
                <button class="relative flex h-[35px] w-[22px] items-center justify-center" aria-label="Chrome"><svg class="h-[18px] w-[18px]" viewBox="0 0 18 18"><path d="M9 9L1.200 4.500A9 9 0 0 1 16.800 4.500H9z" fill="#e94335"/><path d="M9 4.500h7.800A9 9 0 0 1 9 18l4-7z" fill="#fbc116"/><path d="M1.200 4.500A9 9 0 0 0 9 18l4-7-4-2z" fill="#34a853"/><circle cx="9" cy="9" r="4.400" fill="#fff"/><circle cx="9" cy="9" r="3.400" fill="#4285f4"/></svg><i class="absolute bottom-[3px] h-[2px] w-[4px] rounded-full bg-[#a8a5a8]"></i></button>
                <button class="relative flex h-[35px] w-[22px] items-center justify-center" aria-label="Discord"><svg class="h-[18px] w-[18px]" viewBox="0 0 18 18"><circle cx="9" cy="9" r="9" fill="#5865f2"/><path d="M6 5.500c2-.7 4-.7 6 0 1.500 2 2 4 1.900 6.200-.8.700-1.600 1-2.400 1.200l-.6-1a6 6 0 0 1-3.800 0l-.6 1c-.8-.2-1.600-.5-2.400-1.200C4 9.500 4.500 7.500 6 5.500z" fill="#fff"/><circle cx="7" cy="9.500" r="1" fill="#5865f2"/><circle cx="11" cy="9.500" r="1" fill="#5865f2"/></svg><span class="absolute top-[5px] right-[-2px] h-[11px] w-[11px] rounded-full bg-[#d83c4c] text-center text-[7px] leading-[11px] text-white">9+</span><i class="absolute bottom-[3px] h-[2px] w-[4px] rounded-full bg-[#a8a5a8]"></i></button>
                <button class="relative flex h-[35px] w-[22px] items-center justify-center" aria-label="Spotify"><svg class="h-[18px] w-[18px]" viewBox="0 0 18 18"><circle cx="9" cy="9" r="9" fill="#1ed760"/><path d="M4 6.500c3.500-1 7-.7 10.300 1M4.500 9.300c3-.8 6-.5 8.700.9M5 12c2.500-.6 5-.4 7 .7" fill="none" stroke="#12251a" stroke-width="1.400" stroke-linecap="round"/></svg><i class="absolute bottom-[3px] h-[2px] w-[4px] rounded-full bg-[#a8a5a8]"></i></button>
                <button class="relative -mx-[3px] flex h-[29px] w-[28px] items-center justify-center rounded bg-[#3a313c]" aria-label="Bloc de notas"><svg class="h-[18px] w-[15px]" viewBox="0 0 15 18"><rect y="1" width="15" height="16" rx="1" fill="#7fd9ea"/><path d="M2.500 6h10M2.500 8.500h10M2.500 11h10M2.500 13.500h10" stroke="#187a96" stroke-width="1.300"/><path d="M1 2h13" stroke="#e8fbff" stroke-width="2" stroke-dasharray="1 1"/></svg><i class="absolute bottom-0 h-[2px] w-[11px] rounded-full bg-[#67d0e6]"></i></button>
                <button class="relative flex h-[35px] w-[22px] items-center justify-center" aria-label="OBS"><svg class="h-[18px] w-[18px]" viewBox="0 0 18 18"><circle cx="9" cy="9" r="8.300" fill="#242328" stroke="#cfcdd0"/><path d="M9 9C4 9 4 4 7 2.500M9 9c2.500-4.300 6.800-1.800 6.500 1.500M9 9c2.500 4.300-1.800 6.800-5 4.800" fill="none" stroke="#cfcdd0" stroke-width="1.600"/></svg><span class="absolute top-[6px] right-[-1px] h-[9px] w-[9px] rounded-full bg-[#f00c16]"></span><i class="absolute bottom-[3px] h-[2px] w-[4px] rounded-full bg-[#a8a5a8]"></i></button>
            </div>
        </div>
        <div class="mr-[14px] ml-[134px] flex items-center text-[9px] leading-[12px]">
            <svg class="h-[10px] w-[10px] rotate-180"><use href="#i-chev"/></svg>
            <svg class="ml-[13px] h-[13px] w-[12px]" viewBox="0 0 12 13" fill="none" stroke="#7cc4cf" stroke-width="1.200"><rect x="4" y=".7" width="4" height="7.500" rx="2"/><path d="M2 6c0 5.500 8 5.500 8 0M6 10v2.500"/></svg>
            <span class="ml-[8px] w-[30px] text-center">ESP<br>LAA</span>
            <svg class="ml-[6px] h-3 w-3" viewBox="0 0 12 12" fill="none" stroke="currentColor" stroke-width="1.200"><path d="M.5 4.800c3.300-3 7.700-3 11 0M2.300 6.900c2.300-2 5.100-2 7.400 0M4.200 8.800c1.200-1 2.400-1 3.600 0"/><circle cx="6" cy="10" r=".6" fill="currentColor"/></svg>
            <svg class="ml-[4px] h-3 w-3" viewBox="0 0 12 12" fill="none" stroke="currentColor"><path d="M1 4.500h2l3-2.500v8L3 7.500H1zM8 4.300c1 1 1 2.400 0 3.400M9.500 3c1.800 2 1.800 4 0 6"/></svg>
            <svg class="ml-[7px] h-3 w-[13px]" viewBox="0 0 13 12" fill="none" stroke="currentColor" stroke-width="1.100"><rect x=".7" y="2.500" width="10" height="7" rx="1.500"/><path d="M12.200 5v2"/><path d="M2.200 4h3v4h-3z" fill="currentColor" stroke="none"/></svg>
            <span class="ml-[8px] w-[46px] text-right whitespace-nowrap">23:40:30<br>9/11/2025</span>
            <svg class="ml-[6px] h-3 w-3" viewBox="0 0 12 12" fill="none" stroke="currentColor" stroke-width="1.100"><path d="M1.500 9.200h9L9.500 7V4.500a3.500 3.500 0 0 0-7 0V7zM4.700 9.500c.3 1.800 2.300 1.800 2.600 0"/></svg>
        </div>
    </footer>

    <script>
        // Horizontal ruler: one cell per centimetre, number centred over the ticks
        const labels = [2, 1, ''];
        for (let i = 1; i <= 18; i++) labels.push(i);
        const ticks = '<div class="flex h-[3px] items-end justify-between"><i class="h-[3px] w-px bg-[#8a8d90]"></i><i class="h-[2px] w-px bg-[#8a8d90]"></i><i class="h-[2px] w-px bg-[#8a8d90]"></i><i class="h-[2px] w-px bg-[#8a8d90]"></i><i></i></div>';
        document.getElementById('ruler-h').innerHTML = labels.map((n, i) => {
            if (i === 2) {
                return '<div><svg class="mx-auto h-[8px] w-[10px]" viewBox="0 0 10 8"><path d="M0 0h10v2H0zM0 3h10L5 8z" fill="#3b6fe0"/></svg>' + ticks + '</div>';
            }
            if (n === 16) {
                return '<div class="relative">16<svg class="absolute bottom-0 left-1/2 h-[5px] w-[8px] -translate-x-1/2" viewBox="0 0 8 5"><path d="M0 0h8L4 5z" fill="#3b6fe0"/></svg>' + ticks + '</div>';
            }
            return '<div>' + n + ticks + '</div>';
        }).join('');

        // Vertical ruler, numbers read bottom to top
        let rows = '';
        for (let n = 11; n <= 27; n++) {
            rows += `<div class="flex flex-1 items-center justify-between"><span class="rotate-180 leading-[9px] [writing-mode:vertical-rl]">${n}</span><div class="flex h-full flex-col items-end justify-between"><i class="h-px w-[3px] bg-[#8a8d90]"></i><i class="h-px w-[2px] bg-[#8a8d90]"></i><i class="h-px w-[2px] bg-[#8a8d90]"></i><i class="h-px w-[2px] bg-[#8a8d90]"></i><i></i></div></div>`;
        }
        document.getElementById('ruler-v').innerHTML = rows + '<div class="h-[10px]"></div>';
    </script>
</body>
</html>
